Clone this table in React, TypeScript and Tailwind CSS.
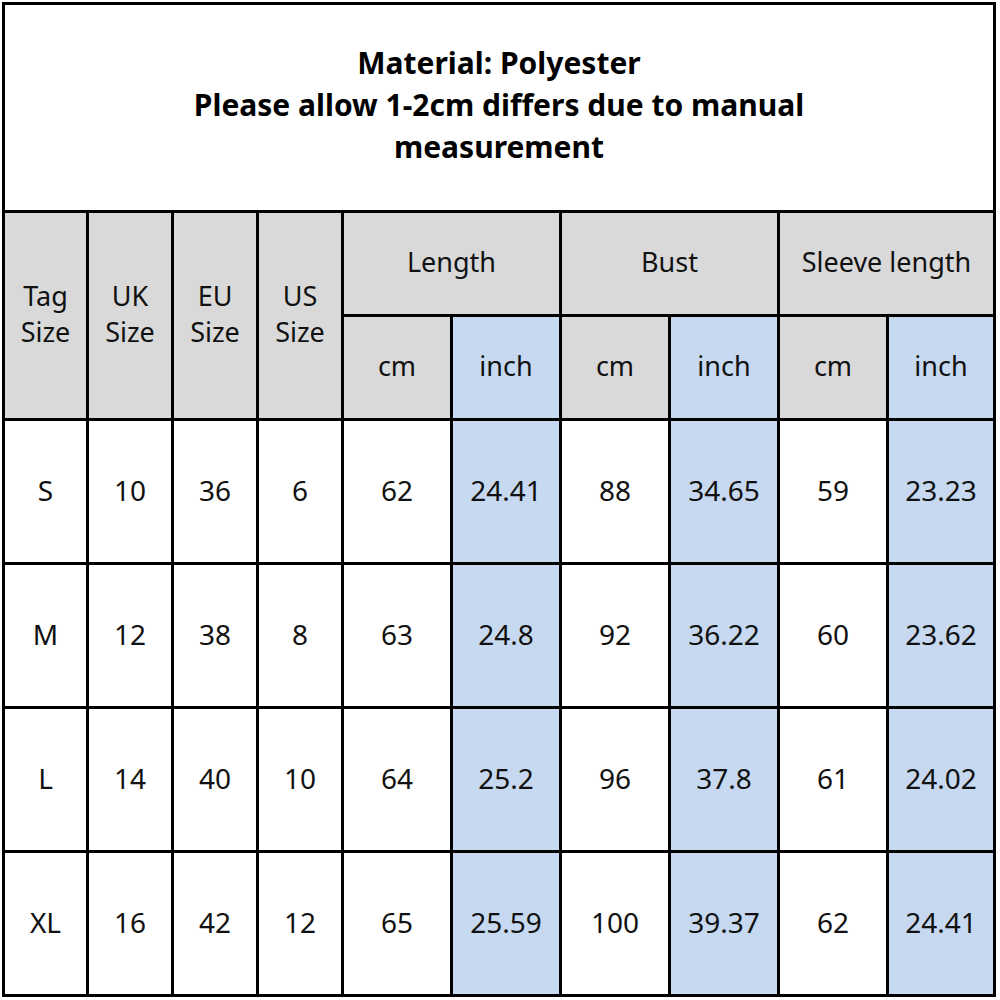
import React from "react";

const rows = [
  ["S", "10", "36", "6", "62", "24.41", "88", "34.65", "59", "23.23"],
  ["M", "12", "38", "8", "63", "24.8", "92", "36.22", "60", "23.62"],
  ["L", "14", "40", "10", "64", "25.2", "96", "37.8", "61", "24.02"],
  ["XL", "16", "42", "12", "65", "25.59", "100", "39.37", "62", "24.41"],
];

const gray = "bg-[#d9d9d9]";
const blue = "bg-[#c6d9f0]";

export default function App() {
  return (
    <div className="w-[1000px] h-[1000px] bg-white pt-[2px] pl-[2px]" style={{ fontFamily: '"Noto Sans", "Open Sans", sans-serif' }}>
      <div className="grid w-[994px] bg-black p-[3px] gap-[3px] grid-cols-[81px_82px_82px_82px_106px_106px_106px_106px_106px_104px] grid-rows-[205px_101px_101px_141px_141px_141px_141px] text-[27px] text-[#111] leading-[36px]">
        <div className="col-span-10 bg-white flex flex-col items-center justify-center pb-[6px] text-center font-bold text-[30px] leading-[42px] text-black">
          <div>Material: Polyester</div>
          <div>Please allow 1-2cm differs due to manual</div>
          <div>measurement</div>
        </div>
        {["Tag", "UK", "EU", "US"].map((t) => (
          <div key={t} className={`row-span-2 ${gray} flex flex-col items-center justify-center pb-[4px] text-center`}>
            <div>{t}</div>
            <div>Size</div>
          </div>
        ))}
        <div className={`col-span-2 ${gray} flex items-center justify-center pb-[4px]`}>Length</div>
        <div className={`col-span-2 ${gray} flex items-center justify-center pb-[4px]`}>Bust</div>
        <div className={`col-span-2 ${gray} flex items-center justify-center pb-[4px]`}>Sleeve length</div>
        {[0, 1, 2].map((i) => (
          <React.Fragment key={i}>
            <div className={`${gray} flex items-center justify-center pb-[4px]`}>cm</div>
            <div className={`${blue} flex items-center justify-center pb-[4px]`}>inch</div>
          </React.Fragment>
        ))}
        {rows.map((r, ri) =>
          r.map((c, ci) => (
            <div
              key={`${ri}-${ci}`}
              className={`${ci >= 4 && ci % 2 === 1 ? blue : "bg-white"} flex items-center justify-center pb-[4px] text-[28px]`}
            >
              {c}
            </div>
          ))
        )}
      </div>
    </div>
  );
}
